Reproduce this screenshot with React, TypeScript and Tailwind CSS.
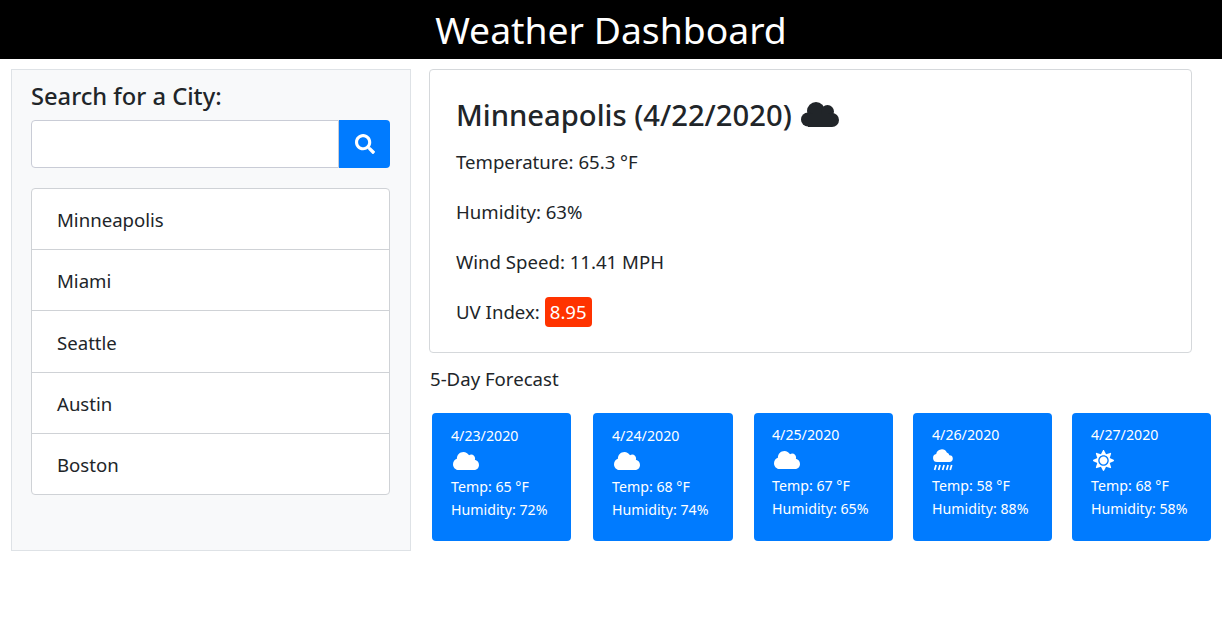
import { FaCloud, FaSearch, FaSun } from "react-icons/fa";

const cities = ["Minneapolis", "Miami", "Seattle", "Austin", "Boston"];

const forecast = [
  { date: "4/23/2020", icon: "cloud", temp: 65, humidity: 72, box: "w-[139px] pt-[11px] pl-[19px]" },
  { date: "4/24/2020", icon: "cloud", temp: 68, humidity: 74, box: "ml-[22px] w-[140px] pt-[11px] pl-[19px]" },
  { date: "4/25/2020", icon: "cloud", temp: 67, humidity: 65, box: "ml-[21px] w-[139px] pt-[10px] pl-[18px]" },
  { date: "4/26/2020", icon: "rain", temp: 58, humidity: 88, box: "ml-[20px] w-[139px] pt-[10px] pl-[19px]" },
  { date: "4/27/2020", icon: "sun", temp: 68, humidity: 58, box: "ml-[20px] w-[139px] pt-[10px] pl-[19px]" },
];

function RainIcon() {
  return (
    <svg viewBox="0 0 22 22" className="h-[22px] w-[22px]" fill="currentColor">
      <path d="M5 13a4 4 0 0 1-.8-7.9A5.6 5.6 0 0 1 14.8 3.6a3.6 3.6 0 0 1 2.6 2.6A3.4 3.4 0 0 1 17.4 13z" />
      <path
        d="M2.6 21l1.5-5M6.6 21l1.5-5M10.6 21l1.5-5M14.6 21l1.5-5M18.2 21l1.5-5"
        stroke="currentColor"
        strokeWidth="1.7"
        fill="none"
      />
    </svg>
  );
}

function CloudsIcon() {
  return (
    <svg viewBox="0 0 38 26" className="h-[26px] w-[38px]" fill="currentColor">
      <circle cx="15" cy="9" r="9" />
      <circle cx="26.5" cy="9.5" r="6.5" />
      <circle cx="7" cy="17.5" r="7" />
      <circle cx="31" cy="18" r="7" />
      <rect x="7" y="12" width="24" height="13" />
    </svg>
  );
}

function DayIcon({ icon }: { icon: string }) {
  if (icon === "rain") return <RainIcon />;
  if (icon === "sun") return <FaSun className="ml-[2px] h-[21px] w-[21px]" />;
  return <FaCloud className="ml-[2px] h-[26px] w-[26px]" />;
}

export default function App() {
  return (
    <div className="h-[627px] overflow-hidden bg-white font-['Noto_Sans',sans-serif] text-[#212529]">
      <header className="h-[59px] bg-black text-center text-[37.3px] leading-[60px] text-white">
        Weather Dashboard
      </header>

      <div className="mt-[10px] flex items-start">
        <aside className="ml-[11px] h-[482px] w-[400px] border border-[#dee2e6] bg-[#f8f9fa] pt-[9px] pr-[20px] pl-[19px]">
          <h2 className="text-[23.7px] leading-[34px] font-medium">Search for a City:</h2>
          <div className="mt-[7px] flex h-[48px]">
            <input className="min-w-0 flex-1 rounded-l border border-[#c9ccd6] bg-white" />
            <button className="flex w-[51px] items-center justify-center rounded-r bg-[#007bff] text-white">
              <FaSearch className="h-[20px] w-[20px]" />
            </button>
          </div>
          <ul className="mt-[20px] rounded border border-[#cfd2d6] bg-white">
            {cities.map((city) => (
              <li
                key={city}
                className="flex h-[61.2px] items-center border-b border-[#cfd2d6] px-[25px] pt-[2px] text-[18.6px] last:h-[60px] last:border-b-0"
              >
                {city}
              </li>
            ))}
          </ul>
        </aside>

        <main className="ml-[18px] w-[793px]">
          <section className="h-[284px] w-[763px] rounded border border-[#d5d8db] px-[26px] pt-[25px]">
            <h2 className="flex items-center gap-[9px] text-[29.2px] leading-[40px] font-medium">
              Minneapolis (4/22/2020)
              <CloudsIcon />
            </h2>
            <p className="mt-[12px] text-[18.6px] leading-[30px]">Temperature: 65.3 °F</p>
            <p className="mt-[20px] text-[18.6px] leading-[30px]">Humidity: 63%</p>
            <p className="mt-[20px] text-[18.6px] leading-[30px]">Wind Speed: 11.41 MPH</p>
            <p className="mt-[20px] flex items-center gap-[5px] text-[18.6px] leading-[30px]">
              UV Index:
              <span className="rounded bg-[#ff3300] px-[5px] text-white">8.95</span>
            </p>
          </section>

          <h3 className="mt-[12px] ml-px text-[18.6px] leading-[28px]">5-Day Forecast</h3>

          <div className="mt-[20px] ml-[3px] flex">
            {forecast.map((day) => (
              <div
                key={day.date}
                className={`h-[128px] rounded bg-[#007bff] text-[14.2px] leading-[23px] text-white ${day.box}`}
              >
                <p>{day.date}</p>
                <div className="flex h-[28px] items-center">
                  <DayIcon icon={day.icon} />
                </div>
                <p>Temp: {day.temp} °F</p>
                <p>Humidity: {day.humidity}%</p>
              </div>
            ))}
          </div>
        </main>
      </div>
    </div>
  );
}
